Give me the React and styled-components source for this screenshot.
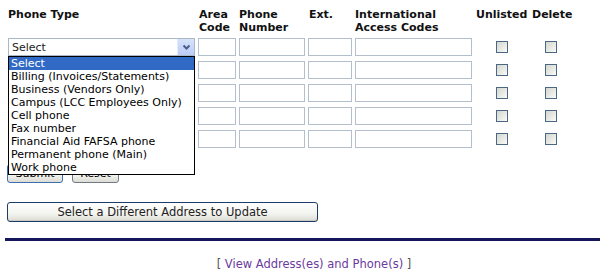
import styled, { createGlobalStyle } from "styled-components";

const GlobalStyle = createGlobalStyle`
  body {
    margin: 0;
    background: #fff;
    color: #000;
    font-family: "DejaVu Sans", Verdana, sans-serif;
    font-size: 11px;
  }
`;

const Page = styled.div`
  width: 600px;
  height: 280px;
  box-sizing: border-box;
  padding: 8px 0 0 8px;
  overflow: hidden;
`;

const PhoneGrid = styled.div`
  display: grid;
  grid-template-columns: 187px 38px 66px 44px 117px 54px 38px;
  grid-template-rows: 25px;
  grid-auto-rows: 18px;
  column-gap: 3px;
  row-gap: 5px;
  align-items: center;
`;

const HeadCell = styled.div`
  align-self: start;
  font-weight: bold;
  line-height: 13px;
  color: #111;
  white-space: nowrap;
  padding-left: ${({ $pad }) => $pad || 0}px;
`;

const TextBox = styled.input`
  box-sizing: border-box;
  width: 100%;
  height: 18px;
  margin: 0;
  border: 1px solid #b3bfcc;
  background: #fff;
  outline: none;
`;

const Check = styled.span`
  justify-self: center;
  width: 12px;
  height: 12px;
  box-sizing: border-box;
  border: 1px solid #4a6886;
  background: linear-gradient(135deg, #d6d6d0 0%, #f2f2ee 80%, #fff 100%);
`;

const SelectWrap = styled.div`
  position: relative;
  height: 18px;
`;

const FakeSelect = styled.div`
  box-sizing: border-box;
  height: 18px;
  display: flex;
  align-items: center;
  justify-content: space-between;
  border: 1px solid #a9b7c6;
  background: #fff;
  padding-left: 3px;
  color: #222;
`;

const Arrow = styled.span`
  width: 16px;
  height: 16px;
  display: flex;
  align-items: center;
  justify-content: center;
  background: linear-gradient(180deg, #d6e2fc 0%, #bccdf6 100%);
  border-left: 1px solid #e4ecfd;
`;

const List = styled.ul`
  position: absolute;
  z-index: 5;
  top: 18px;
  left: 0;
  width: 187px;
  box-sizing: border-box;
  margin: 0;
  padding: 0;
  list-style: none;
  border: 1px solid #000;
  background: #fff;
`;

const Option = styled.li`
  height: 13px;
  line-height: 13px;
  padding-left: 2px;
  white-space: nowrap;
  background: ${({ $active }) => ($active ? "#316ac5" : "#fff")};
  color: ${({ $active }) => ($active ? "#fff" : "#000")};
`;

const ButtonRow = styled.div`
  display: flex;
  gap: 9px;
  margin: 16px 0 0 -1px;
`;

const FormButton = styled.button`
  height: 19px;
  padding: 0;
  width: ${({ $w }) => $w}px;
  font-family: "DejaVu Sans", Tahoma, sans-serif;
  font-size: 11px;
  color: #000;
  border: 1px solid ${({ $primary }) => ($primary ? "#3b6fb0" : "#707a86")};
  border-radius: 3px;
  background: linear-gradient(180deg, #ffffff 0%, #f3f3ef 60%, #dcdcd4 100%);
`;

const WideButton = styled(FormButton)`
  display: block;
  width: 311px;
  height: 20px;
  margin: 19px 0 0 -1px;
  font-size: 11.5px;
  color: #222;
  border: 1px solid #1d3b6a;
  box-shadow: inset 0 -1px 0 #c9c9c2;
`;

const Rule = styled.hr`
  height: 3px;
  margin: 16px 0 0 -3px;
  border: 0;
  background: #16165a;
`;

const Footer = styled.div`
  margin-top: 15px;
  padding-left: 20px;
  text-align: center;
  font-size: 11.5px;
  line-height: 16px;
  color: #555;
`;

const Link = styled.a`
  color: #6a3a9e;
  text-decoration: none;
`;

const options = [
  "Select",
  "Billing (Invoices/Statements)",
  "Business (Vendors Only)",
  "Campus (LCC Employees Only)",
  "Cell phone",
  "Fax number",
  "Financial Aid FAFSA phone",
  "Permanent phone (Main)",
  "Work phone",
];

const Chevron = () => (
  <svg width="9" height="7" viewBox="0 0 9 7">
    <path d="M1.5 1.5 L4.5 4.5 L7.5 1.5" fill="none" stroke="#4a5f8c" strokeWidth="2" />
  </svg>
);

// rows under the open list: their select text is hidden behind it anyway
const PhoneRow = ({ open }) => (
  <>
    <SelectWrap>
      <FakeSelect>
        {open ? "Select" : ""}
        <Arrow>
          <Chevron />
        </Arrow>
      </FakeSelect>
      {open && (
        <List>
          {options.map((o, i) => (
            <Option key={o} $active={i === 0}>
              {o}
            </Option>
          ))}
        </List>
      )}
    </SelectWrap>
    <TextBox />
    <TextBox />
    <TextBox />
    <TextBox />
    <Check />
    <Check />
  </>
);

const App = () => {
  return (
    <Page>
      <GlobalStyle />
      <PhoneGrid>
        <HeadCell>Phone Type</HeadCell>
        <HeadCell $pad={1}>
          Area
          <br />
          Code
        </HeadCell>
        <HeadCell>
          Phone
          <br />
          Number
        </HeadCell>
        <HeadCell $pad={1}>Ext.</HeadCell>
        <HeadCell>
          International
          <br />
          Access Codes
        </HeadCell>
        <HeadCell $pad={1}>Unlisted</HeadCell>
        <HeadCell>Delete</HeadCell>
        {[0, 1, 2, 3, 4].map((r) => (
          <PhoneRow key={r} open={r === 0} />
        ))}
      </PhoneGrid>
      <ButtonRow>
        <FormButton $primary $w={56}>
          Submit
        </FormButton>
        <FormButton $w={47}>Reset</FormButton>
      </ButtonRow>
      <WideButton>Select a Different Address to Update</WideButton>
      <Rule />
      <Footer>
        [ <Link href="#">View Address(es) and Phone(s)</Link> ]
      </Footer>
    </Page>
  );
};

export default App;
